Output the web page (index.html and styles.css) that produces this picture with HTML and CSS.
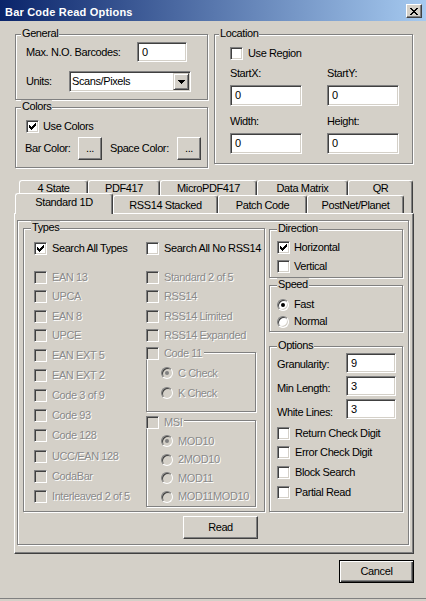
FILE: index.html
```html
<!DOCTYPE html>
<html>
<head>
<meta charset="utf-8">
<title>Bar Code Read Options</title>
<link rel="stylesheet" href="styles.css">
</head>
<body>
<div class="window">
  <div class="titlebar">
    <span class="title">Bar Code Read Options</span>
    <span class="close"><svg width="8" height="7" viewBox="0 0 8 7" shape-rendering="crispEdges"><path d="M0 0h2v1h-2zM6 0h2v1h-2zM1 1h2v1h-2zM5 1h2v1h-2zM2 2h4v1h-4zM3 3h2v1h-2zM2 4h4v1h-4zM1 5h2v1h-2zM5 5h2v1h-2zM0 6h2v1h-2zM6 6h2v1h-2z"/></svg></span>
  </div>

  <div class="client">
    <div class="top">
      <div class="leftcol">
        <div class="group general">
          <span class="cap">General</span>
          <div class="row r1"><span class="w111">Max. N.O. Barcodes:</span><span class="edit e50">0</span></div>
          <div class="row r2"><span class="w43">Units:</span><span class="combo"><span>Scans/Pixels</span><span class="dd"><svg width="7" height="4" viewBox="0 0 7 4" shape-rendering="crispEdges"><path d="M0 0h7v1h-1v1h-1v1h-1v1h-1v-1h-1v-1h-1v-1h-1z"/></svg></span></span></div>
        </div>
        <div class="group colors">
          <span class="cap">Colors</span>
          <div class="row r1 chk"><span class="cb on"><svg width="7" height="7" viewBox="0 0 7 7" shape-rendering="crispEdges"><path d="M0 2H1V3H2V4H3V3H4V2H5V1H6V0H7V3H6V4H5V5H4V6H3V7H2V6H1V5H0Z"/></svg></span><span>Use Colors</span></div>
          <div class="row r2"><span class="lb1">Bar Color:</span><button class="btn dots">...</button><span class="lb2">Space Color:</span><button class="btn dots">...</button></div>
        </div>
      </div>
      <div class="group location">
        <span class="cap">Location</span>
        <div class="row r1 chk"><span class="cb"></span><span>Use Region</span></div>
        <div class="locgrid">
          <div class="field"><span class="flbl">StartX:</span><span class="edit e72">0</span></div>
          <div class="field"><span class="flbl">StartY:</span><span class="edit e72">0</span></div>
          <div class="field"><span class="flbl">Width:</span><span class="edit e72">0</span></div>
          <div class="field"><span class="flbl">Height:</span><span class="edit e72">0</span></div>
        </div>
      </div>
    </div>

    <div class="tabs">
      <div class="trow trow1">
        <span class="tab t69">4 State</span>
        <span class="tab t72">PDF417</span>
        <span class="tab t97">MicroPDF417</span>
        <span class="tab t91">Data Matrix</span>
        <span class="tab t65">QR</span>
      </div>
      <div class="trow trow2">
        <span class="tab sel t98">Standard 1D</span>
        <span class="tab t105">RSS14 Stacked</span>
        <span class="tab t89">Patch Code</span>
        <span class="tab t97">PostNet/Planet</span>
      </div>
    </div>

    <div class="panel">
      <div class="group etched">
        <div class="cols">
          <div class="group types">
            <span class="cap">Types</span>
            <div class="thead">
              <div class="row chk"><span class="cb on"><svg width="7" height="7" viewBox="0 0 7 7" shape-rendering="crispEdges"><path d="M0 2H1V3H2V4H3V3H4V2H5V1H6V0H7V3H6V4H5V5H4V6H3V7H2V6H1V5H0Z"/></svg></span><span>Search All Types</span></div>
              <div class="row chk"><span class="cb"></span><span>Search All No RSS14</span></div>
            </div>
            <div class="tbody">
              <div class="list">
                <div class="row chk h19"><span class="cb dis"></span><span class="dt">EAN 13</span></div>
                <div class="row chk h19"><span class="cb dis"></span><span class="dt">UPCA</span></div>
                <div class="row chk h19"><span class="cb dis"></span><span class="dt">EAN 8</span></div>
                <div class="row chk h19"><span class="cb dis"></span><span class="dt">UPCE</span></div>
                <div class="row chk h20"><span class="cb dis"></span><span class="dt">EAN EXT 5</span></div>
                <div class="row chk h20"><span class="cb dis"></span><span class="dt">EAN EXT 2</span></div>
                <div class="row chk h20"><span class="cb dis"></span><span class="dt">Code 3 of 9</span></div>
                <div class="row chk h20"><span class="cb dis"></span><span class="dt">Code 93</span></div>
                <div class="row chk h20"><span class="cb dis"></span><span class="dt">Code 128</span></div>
                <div class="row chk h20"><span class="cb dis"></span><span class="dt">UCC/EAN 128</span></div>
                <div class="row chk h20"><span class="cb dis"></span><span class="dt">CodaBar</span></div>
                <div class="row chk h20"><span class="cb dis"></span><span class="dt">Interleaved 2 of 5</span></div>
              </div>
              <div class="list">
                <div class="row chk h19"><span class="cb dis"></span><span class="dt">Standard 2 of 5</span></div>
                <div class="row chk h19"><span class="cb dis"></span><span class="dt">RSS14</span></div>
                <div class="row chk h19"><span class="cb dis"></span><span class="dt">RSS14 Limited</span></div>
                <div class="row chk h19"><span class="cb dis"></span><span class="dt">RSS14 Expanded</span></div>
                <div class="group sub code11">
                  <div class="gcap"><span class="cb dis"></span><span class="dt">Code 11</span></div>
                  <div class="row rad"><span class="rd dis on"></span><span class="dt">C Check</span></div>
                  <div class="row rad"><span class="rd dis"></span><span class="dt">K Check</span></div>
                </div>
                <div class="group sub msi">
                  <div class="gcap"><span class="cb dis"></span><span class="dt">MSI</span></div>
                  <div class="row rad"><span class="rd dis on"></span><span class="dt">MOD10</span></div>
                  <div class="row rad"><span class="rd dis"></span><span class="dt">2MOD10</span></div>
                  <div class="row rad"><span class="rd dis"></span><span class="dt">MOD11</span></div>
                  <div class="row rad"><span class="rd dis"></span><span class="dt">MOD11MOD10</span></div>
                </div>
              </div>
            </div>
          </div>

          <div class="rcol">
            <div class="group dir">
              <span class="cap">Direction</span>
              <div class="row chk"><span class="cb on"><svg width="7" height="7" viewBox="0 0 7 7" shape-rendering="crispEdges"><path d="M0 2H1V3H2V4H3V3H4V2H5V1H6V0H7V3H6V4H5V5H4V6H3V7H2V6H1V5H0Z"/></svg></span><span>Horizontal</span></div>
              <div class="row chk"><span class="cb"></span><span>Vertical</span></div>
            </div>
            <div class="group speed">
              <span class="cap">Speed</span>
              <div class="row rad"><span class="rd on"></span><span>Fast</span></div>
              <div class="row rad"><span class="rd"></span><span>Normal</span></div>
            </div>
            <div class="group opts">
              <span class="cap">Options</span>
              <div class="fields">
                <div class="lcol"><span>Granularity:</span><span>Min Length:</span><span>White Lines:</span></div>
                <div class="icol"><span class="edit">9</span><span class="edit">3</span><span class="edit">3</span></div>
              </div>
              <div class="ochk">
                <div class="row chk"><span class="cb"></span><span>Return Check Digit</span></div>
                <div class="row chk"><span class="cb"></span><span>Error Check Digit</span></div>
                <div class="row chk"><span class="cb"></span><span>Block Search</span></div>
                <div class="row chk"><span class="cb"></span><span>Partial Read</span></div>
              </div>
            </div>
          </div>
        </div>
        <button class="btn read">Read</button>
      </div>
    </div>

    <div class="footer"><button class="btn def">Cancel</button></div>
  </div>
  <div class="wbottom"></div>
</div>
</body>
</html>
```

FILE: styles.css
```css
* { box-sizing: border-box; margin: 0; padding: 0; }
html, body { background: #D4D0C8; }
body {
  font-family: "Liberation Sans", Arial, sans-serif;
  font-size: 11px;
  line-height: 13px;
  letter-spacing: -0.4px;
  color: #000;
}
.window {
  width: 426px;
  height: 601px;
  display: flex;
  flex-direction: column;
  background: #D4D0C8;
  overflow: hidden;
}

/* title bar */
.titlebar {
  flex: none;
  height: 21px;
  display: flex;
  align-items: flex-start;
  justify-content: space-between;
  padding: 0 4px 0 5px;
  background: linear-gradient(to right, #0A246A, #A6CAF0);
}
.title {
  margin-top: 6px;
  color: #fff;
  font-weight: bold;
  letter-spacing: 0.2px;
  white-space: nowrap;
}
.close {
  margin-top: 4px;
  width: 16px;
  height: 14px;
  display: flex;
  align-items: center;
  justify-content: center;
  background: #D4D0C8;
  border: 1px solid;
  border-color: #fff #404040 #404040 #fff;
  box-shadow: inset -1px -1px 0 #808080;
}
.close svg { fill: #000; }

/* generic */
.row { display: flex; align-items: center; white-space: nowrap; }
.chk { gap: 5px; }
.rad { gap: 5px; }
.group {
  position: relative;
  border: 1px solid #808080;
  box-shadow: 1px 1px 0 #fff, inset 1px 1px 0 #fff;
}
.cap {
  position: absolute;
  top: -8px;
  padding: 0 1px;
  background: #D4D0C8;
  white-space: nowrap;
}
.edit {
  display: flex;
  align-items: center;
  height: 20px;
  background: #fff;
  border: 1px solid;
  border-color: #808080 #fff #fff #808080;
  box-shadow: inset 1px 1px 0 #404040, inset -1px -1px 0 #D4D0C8;
  padding-left: 4px;
}
.cb {
  flex: none;
  width: 13px;
  height: 13px;
  display: flex;
  align-items: center;
  justify-content: center;
  background: #fff;
  border: 1px solid;
  border-color: #808080 #fff #fff #808080;
  box-shadow: inset 1px 1px 0 #404040, inset -1px -1px 0 #D4D0C8;
}
.cb svg { fill: #000; }
.cb.dis { background: #D4D0C8; }
.rd {
  flex: none;
  width: 12px;
  height: 12px;
  border-radius: 50%;
  display: flex;
  align-items: center;
  justify-content: center;
  background: #fff;
  border: 1px solid;
  border-color: #808080 #fff #fff #808080;
  box-shadow: inset 1px 1px 0 #404040, inset -1px -1px 0 #D4D0C8;
}
.rd.on::after {
  content: "";
  width: 4px;
  height: 4px;
  border-radius: 50%;
  background: #000;
}
.rd.dis { background: #D4D0C8; }
.rd.dis.on::after { background: #808080; }
.dt { color: #8a8a8a; text-shadow: 1px 1px 0 #fff; }
.btn {
  display: flex;
  align-items: center;
  justify-content: center;
  font: inherit;
  letter-spacing: inherit;
  color: #000;
  background: #D4D0C8;
  border: 1px solid;
  border-color: #fff #404040 #404040 #fff;
  box-shadow: inset -1px -1px 0 #808080;
}

/* top section */
.top {
  display: flex;
  align-items: flex-start;
  gap: 6px;
  padding-left: 15px;
  margin-top: 13px;
}
.leftcol {
  width: 193px;
  display: flex;
  flex-direction: column;
  gap: 7px;
}
.general { height: 66px; padding: 7px 0 0 10px; }
.general .cap { left: 5px; }
.general .r1 { height: 20px; }
.general .r2 { height: 21px; margin-top: 9px; }
.w111 { width: 111px; }
.w43 { width: 43px; }
.e50 { width: 50px; }
.combo {
  width: 122px;
  height: 21px;
  display: flex;
  align-items: center;
  justify-content: space-between;
  background: #fff;
  border: 1px solid;
  border-color: #808080 #fff #fff #808080;
  box-shadow: inset 1px 1px 0 #404040, inset -1px -1px 0 #D4D0C8;
  padding: 0 1px 0 2px;
}
.dd {
  width: 16px;
  height: 17px;
  display: flex;
  align-items: center;
  justify-content: center;
  background: #D4D0C8;
  border: 1px solid;
  border-color: #D4D0C8 #404040 #404040 #D4D0C8;
  box-shadow: inset 1px 1px 0 #fff, inset -1px -1px 0 #808080;
}
.dd svg { fill: #000; }

.colors { height: 61px; padding: 8px 0 0 10px; }
.colors .cap { left: 5px; }
.colors .r1 { height: 20px; gap: 4px; }
.colors .r2 { height: 23px; margin-top: 1px; margin-left: -1px; }
.lb1 { width: 53px; }
.lb2 { width: 67px; margin-left: 8px; }
.dots { width: 24px; height: 23px; }

.location { width: 199px; height: 130px; padding: 8px 0 0 15px; }
.location .cap { left: 4px; }
.location .r1 { height: 20px; }
.locgrid {
  display: grid;
  grid-template-columns: 72px 72px;
  column-gap: 25px;
  row-gap: 8px;
  margin-top: 3px;
}
.field { display: flex; flex-direction: column; gap: 5px; }
.flbl { line-height: 14px; }
.e72 { width: 72px; height: 21px; }

/* tabs */
.tabs {
  display: grid;
  height: 33px;
  margin-top: 12px;
}
.trow { grid-area: 1 / 1 / 2 / 2; display: flex; }
.trow1 { height: 33px; padding-left: 19px; }
.trow2 { align-self: end; height: 18px; padding-left: 15px; align-items: flex-start; }
.tab {
  flex: none;
  height: 33px;
  padding-top: 1px;
  text-align: center;
  white-space: nowrap;
  background: #D4D0C8;
  border: 1px solid;
  border-bottom: 0;
  border-color: #fff #404040 #fff #fff;
  border-radius: 3px 3px 0 0;
  box-shadow: inset -1px 0 0 #808080;
}
.trow2 .tab { height: 18px; padding-top: 3px; }
.trow2 .tab.sel {
  position: relative;
  z-index: 2;
  height: 21px;
  margin-top: -2px;
  padding-top: 2px;
}
.t65 { width: 65px; }
.t69 { width: 69px; }
.t72 { width: 72px; }
.t89 { width: 89px; }
.t91 { width: 91px; }
.t97 { width: 97px; }
.t98 { width: 98px; }
.t105 { width: 105px; }

/* panel */
.panel {
  margin-left: 14px;
  width: 400px;
  height: 341px;
  padding: 6px 0 0 2px;
  border: 1px solid;
  border-color: #fff #404040 #404040 #fff;
  box-shadow: inset -1px -1px 0 #808080;
}
.etched { width: 392px; height: 325px; padding: 7px 0 0 5px; }
.cols { display: flex; align-items: flex-start; gap: 4px; }

.types { width: 242px; height: 284px; padding: 9px 0 0 10px; }
.types .cap { left: 7px; }
.thead {
  display: grid;
  grid-template-columns: 112px auto;
  height: 20px;
  align-items: center;
}
.tbody {
  display: grid;
  grid-template-columns: 112px 110px;
  align-items: start;
  margin-top: 10px;
}
.list { display: flex; flex-direction: column; }
.h19 { height: 19.25px; }
.h20 { height: 20.2px; }
.sub { width: 110px; }
.gcap {
  position: absolute;
  left: -1px;
  top: -6px;
  height: 13px;
  display: flex;
  align-items: center;
  gap: 5px;
  padding-right: 2px;
  background: #D4D0C8;
  white-space: nowrap;
}
.code11 { height: 60px; margin-top: 7px; padding: 10px 0 0 14px; }
.code11 .rad { height: 20px; }
.msi { height: 87px; margin-top: 8px; padding: 10.75px 0 0 14px; }
.msi .gcap { top: -5px; }
.msi .rad { height: 18.5px; }

.rcol { width: 134px; display: flex; flex-direction: column; }
.dir, .speed, .opts { width: 134px; }
.dir .cap, .speed .cap, .opts .cap { left: 7px; }
.dir { height: 49px; margin-top: 1px; padding: 8px 0 0 7px; }
.dir .row { height: 19px; gap: 4px; }
.speed { height: 47px; margin-top: 7px; padding: 10px 0 0 7px; }
.speed .row { height: 17px; }
.opts { height: 166px; margin-top: 14px; padding: 6px 0 0 7px; }
.fields { display: flex; }
.lcol {
  width: 69px;
  display: flex;
  flex-direction: column;
  gap: 11px;
  padding-top: 4.5px;
  white-space: nowrap;
}
.icol { display: flex; flex-direction: column; gap: 3px; }
.icol .edit { width: 50px; height: 20px; }
.ochk { margin-top: 4px; }
.ochk .row { height: 20px; }
.ochk .row:nth-child(2) { height: 19px; }

.read { width: 75px; height: 23px; margin: 4px 0 0 160px; }

.footer { padding: 6px 0 0 339px; }
.def {
  width: 75px;
  height: 23px;
  border: 1px solid #000;
  box-shadow: inset 1px 1px 0 #fff, inset -1px -1px 0 #404040, inset -2px -2px 0 #808080;
}

.wbottom {
  margin-top: auto;
  flex: none;
  height: 3px;
  border-top: 1px solid #808080;
}
```
